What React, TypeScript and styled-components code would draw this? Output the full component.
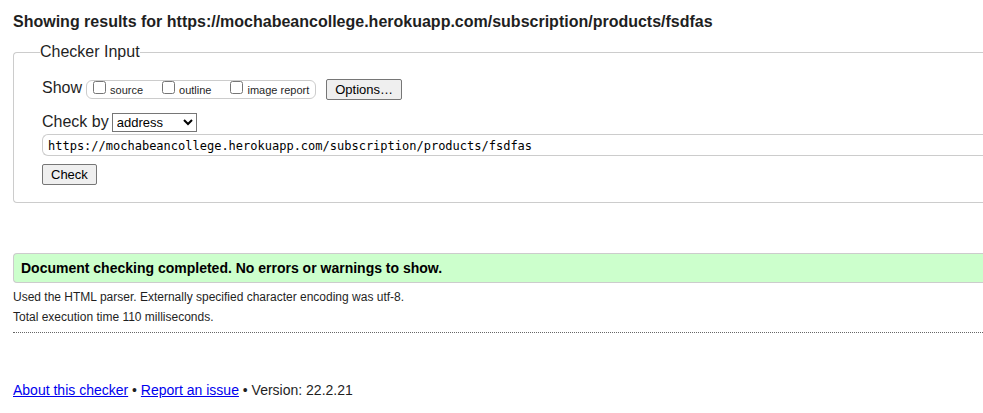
import React from "react";
import styled, { createGlobalStyle } from "styled-components";

const GlobalStyle = createGlobalStyle`
  *, *::before, *::after { box-sizing: border-box; }
  body {
    margin: 0;
    background: #fff;
    color: #1f1f1f;
    font-family: "Liberation Sans", Arial, sans-serif;
    font-size: 16px;
  }
`;

const Page = styled.main`
  padding: 13px 0 12px 13px;
`;

const Title = styled.h1`
  margin: 0 0 11px;
  font-size: 16px;
  line-height: 18px;
  font-weight: bold;
`;

const InputPanel = styled.fieldset`
  min-width: 0;
  margin: 0;
  padding: 17px 0 17px 28px;
  border: 1px solid #ccc;
  border-right: 0;
  border-radius: 4px 0 0 4px;
`;

const PanelTitle = styled.legend`
  margin-left: -2px;
  padding: 0;
  line-height: 20px;
`;

const Row = styled.div`
  display: flex;
  align-items: center;
  gap: 4px;
`;

const ShowRow = styled(Row)`
  height: 21px;
  margin-bottom: 13px;
`;

const CheckRow = styled(Row)`
  height: 19px;
  gap: 3px;
  margin-bottom: 2px;
`;

const RowLabel = styled.label`
  align-self: flex-start;
  line-height: 18px;
`;

const OptionGroup = styled.div`
  display: flex;
  align-items: center;
  gap: 19px;
  height: 19px;
  margin-right: 6px;
  padding: 0 6px;
  border: 1px solid #ccc;
  border-radius: 6px;
`;

const OptionLabel = styled.label`
  display: flex;
  align-items: flex-end;
  gap: 4px;
  height: 17px;
  font-size: 11px;
  line-height: 15px;
`;

const TickBox = styled.input`
  width: 13px;
  height: 13px;
  margin: 0;
  align-self: flex-start;
`;

const Button = styled.button`
  height: 21px;
  padding: 0 8px;
  border: 1px solid #767676;
  border-radius: 2px;
  background: #efefef;
  color: #000;
  font-family: inherit;
  font-size: 13px;
  line-height: 16px;
`;

const MethodSelect = styled.select`
  width: 85px;
  height: 19px;
  padding: 0;
  border: 1px solid #767676;
  border-radius: 0;
  background: #fff;
  color: #000;
  font-family: inherit;
  font-size: 13px;
`;

const AddressInput = styled.input`
  display: block;
  width: 100%;
  height: 22px;
  margin: 0 0 8px;
  padding: 2px 5px 0;
  border: 1px solid #ccc;
  border-right: 0;
  border-radius: 6px 0 0 6px;
  background: #fff;
  color: #000;
  font-family: "DejaVu Sans Mono", monospace;
  font-size: 12px;
`;

const Success = styled.p`
  margin: 50px 0 4px;
  padding: 6px 7px;
  border: 1px solid #ccc;
  border-right: 0;
  border-radius: 4px 0 0 4px;
  background: #cfc;
  color: #000;
  font-size: 14px;
  line-height: 16px;
  font-weight: bold;
`;

const Details = styled.div`
  padding-bottom: 5px;
  border-bottom: 1px dotted #666;
`;

const Detail = styled.p`
  margin: 0;
  font-size: 12px;
  line-height: 20px;
`;

const Footer = styled.footer`
  margin-top: 48px;
  font-size: 14px;
  line-height: 18px;
`;

const Link = styled.a`
  color: #00e;
  text-decoration: underline;
`;

const address = "https://mochabeancollege.herokuapp.com/subscription/products/fsdfas";
const reports = ["source", "outline", "image report"];

export default function App() {
  return (
    <>
      <GlobalStyle />
      <Page>
        <Title>Showing results for {address}</Title>
        <form onSubmit={(e) => e.preventDefault()}>
          <InputPanel>
            <PanelTitle>Checker Input</PanelTitle>
            <ShowRow>
              <RowLabel as="span" id="show-label">Show</RowLabel>
              <OptionGroup role="group" aria-labelledby="show-label">
                {reports.map((name) => (
                  <OptionLabel key={name}>
                    <TickBox type="checkbox" name={name} />
                    {name}
                  </OptionLabel>
                ))}
              </OptionGroup>
              <Button type="button">Options…</Button>
            </ShowRow>
            <CheckRow>
              <RowLabel htmlFor="method">Check by</RowLabel>
              <MethodSelect id="method" defaultValue="address">
                <option value="address">address</option>
                <option value="file">file upload</option>
                <option value="text">text input</option>
              </MethodSelect>
            </CheckRow>
            <AddressInput type="url" aria-label="Address" defaultValue={address} />
            <Button type="submit">Check</Button>
          </InputPanel>
        </form>
        <Success role="status">Document checking completed. No errors or warnings to show.</Success>
        <Details>
          <Detail>Used the HTML parser. Externally specified character encoding was utf-8.</Detail>
          <Detail>Total execution time 110 milliseconds.</Detail>
        </Details>
        <Footer>
          <Link href="#about">About this checker</Link> • <Link href="#issues">Report an issue</Link> • Version: 22.2.21
        </Footer>
      </Page>
    </>
  );
}
